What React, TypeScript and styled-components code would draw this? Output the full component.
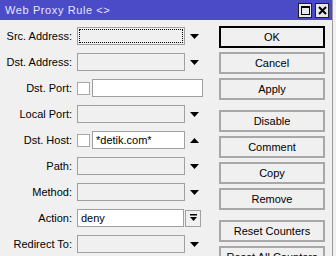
import React from "react";
import styled, { createGlobalStyle } from "styled-components";

const Global = createGlobalStyle`
  html, body { margin: 0; padding: 0; background: #f0f0f0; }
  body {
    font-family: "Liberation Sans", Arial, sans-serif;
    font-size: 11px;
    color: #000;
    overflow: hidden;
  }
`;

const Window = styled.div`
  width: 332px;
  height: 256px;
  border-right: 1px solid #9a9a9a;
  background: #f0f0f0;
  overflow: hidden;
`;

const TitleBar = styled.div`
  height: 20px;
  background: #4b4bc8;
  display: flex;
  align-items: center;
  justify-content: space-between;
  padding: 0 3px 0 5px;
`;

const Title = styled.span`
  color: #e6e6ff;
  font-size: 11px;
  letter-spacing: 0.6px;
`;

const TitleButtons = styled.div`
  display: flex;
  gap: 3px;
`;

const TitleBtn = styled.div`
  width: 12px;
  height: 13px;
  border: 1px solid #202020;
  background: #e8e8e8;
  display: flex;
  align-items: center;
  justify-content: center;
`;

const Body = styled.div`
  display: flex;
  padding-top: 6px;
`;

const Form = styled.div`
  width: 203px;
  margin-top: 1px;
  display: flex;
  flex-direction: column;
  gap: 8px;
`;

const Row = styled.div`
  display: grid;
  grid-template-columns: 72px 1fr;
  column-gap: 5px;
  height: 18px;
  align-items: center;
`;

const Label = styled.label`
  text-align: right;
  white-space: nowrap;
`;

const Field = styled.div`
  display: flex;
  align-items: center;
  height: 18px;
`;

const Input = styled.div<{ $w: number; $disabled?: boolean; $focus?: boolean }>`
  box-sizing: border-box;
  width: ${(p) => p.$w}px;
  height: 18px;
  border: 1px solid #a0a0a0;
  background: ${(p) => (p.$disabled ? "#f0f0f0" : "#fff")};
  padding: 0 3px;
  line-height: 16px;
  white-space: nowrap;
  ${(p) => (p.$focus ? "outline: 1px dotted #000; outline-offset: -3px;" : "")}
`;

const CheckBox = styled.div`
  box-sizing: border-box;
  width: 13px;
  height: 13px;
  border: 1px solid #a8a8a8;
  background: #fff;
  margin-right: 2px;
`;

const ArrowSlot = styled.div`
  width: 18px;
  height: 18px;
  display: flex;
  align-items: center;
  justify-content: center;
`;

const SmallBtn = styled.div`
  box-sizing: border-box;
  width: 16px;
  height: 17px;
  margin-left: 1px;
  border: 1px solid #a0a0a0;
  background: #f0f0f0;
  display: flex;
  align-items: center;
  justify-content: center;
`;

const Buttons = styled.div`
  margin-left: 16px;
  width: 106px;
  display: flex;
  flex-direction: column;
  gap: 4px;
`;

const Group = styled.div`
  display: flex;
  flex-direction: column;
  gap: 4px;
  & + & { margin-top: 6px; }
`;

const Button = styled.div<{ $default?: boolean }>`
  box-sizing: border-box;
  height: 22px;
  border: 2px solid ${(p) => (p.$default ? "#000" : "#a8a8a8")};
  background: #f0f0f0;
  display: flex;
  align-items: center;
  justify-content: center;
  white-space: nowrap;
`;

const Down = () => (
  <svg width="9" height="5" viewBox="0 0 9 5">
    <polygon points="0,0 9,0 4.5,5" fill="#000" />
  </svg>
);

const Up = () => (
  <svg width="9" height="5" viewBox="0 0 9 5">
    <polygon points="0,5 9,5 4.5,0" fill="#000" />
  </svg>
);

const BarDown = () => (
  <svg width="7" height="8" viewBox="0 0 7 8">
    <rect x="0" y="0" width="7" height="1.5" fill="#000" />
    <polygon points="0,3 7,3 3.5,7" fill="#000" />
  </svg>
);

export default function App() {
  return (
    <>
      <Global />
      <Window>
        <TitleBar>
          <Title>Web Proxy Rule &lt;&gt;</Title>
          <TitleButtons>
            <TitleBtn>
              <svg width="9" height="9" viewBox="0 0 9 9">
                <rect x="0.5" y="0.5" width="8" height="8" fill="none" stroke="#000" />
                <rect x="0.5" y="0.5" width="8" height="1.5" fill="#000" />
              </svg>
            </TitleBtn>
            <TitleBtn>
              <svg width="9" height="9" viewBox="0 0 9 9">
                <path d="M1 1 L8 8 M8 1 L1 8" stroke="#000" strokeWidth="2" />
              </svg>
            </TitleBtn>
          </TitleButtons>
        </TitleBar>
        <Body>
          <Form>
            <Row>
              <Label>Src. Address:</Label>
              <Field>
                <Input $w={108} $disabled $focus />
                <ArrowSlot><Down /></ArrowSlot>
              </Field>
            </Row>
            <Row>
              <Label>Dst. Address:</Label>
              <Field>
                <Input $w={108} $disabled />
                <ArrowSlot><Down /></ArrowSlot>
              </Field>
            </Row>
            <Row>
              <Label>Dst. Port:</Label>
              <Field>
                <CheckBox />
                <Input $w={111} />
              </Field>
            </Row>
            <Row>
              <Label>Local Port:</Label>
              <Field>
                <Input $w={108} $disabled />
                <ArrowSlot><Down /></ArrowSlot>
              </Field>
            </Row>
            <Row>
              <Label>Dst. Host:</Label>
              <Field>
                <CheckBox />
                <Input $w={93}>*detik.com*</Input>
                <ArrowSlot><Up /></ArrowSlot>
              </Field>
            </Row>
            <Row>
              <Label>Path:</Label>
              <Field>
                <Input $w={108} $disabled />
                <ArrowSlot><Down /></ArrowSlot>
              </Field>
            </Row>
            <Row>
              <Label>Method:</Label>
              <Field>
                <Input $w={108} $disabled />
                <ArrowSlot><Down /></ArrowSlot>
              </Field>
            </Row>
            <Row>
              <Label>Action:</Label>
              <Field>
                <Input $w={107}>deny</Input>
                <SmallBtn><BarDown /></SmallBtn>
              </Field>
            </Row>
            <Row>
              <Label>Redirect To:</Label>
              <Field>
                <Input $w={108} $disabled />
                <ArrowSlot><Down /></ArrowSlot>
              </Field>
            </Row>
          </Form>
          <Buttons>
            <Group>
              <Button $default>OK</Button>
              <Button>Cancel</Button>
              <Button>Apply</Button>
            </Group>
            <Group>
              <Button>Disable</Button>
              <Button>Comment</Button>
              <Button>Copy</Button>
              <Button>Remove</Button>
            </Group>
            <Group>
              <Button>Reset Counters</Button>
              <Button>Reset All Counters</Button>
            </Group>
          </Buttons>
        </Body>
      </Window>
    </>
  );
}
